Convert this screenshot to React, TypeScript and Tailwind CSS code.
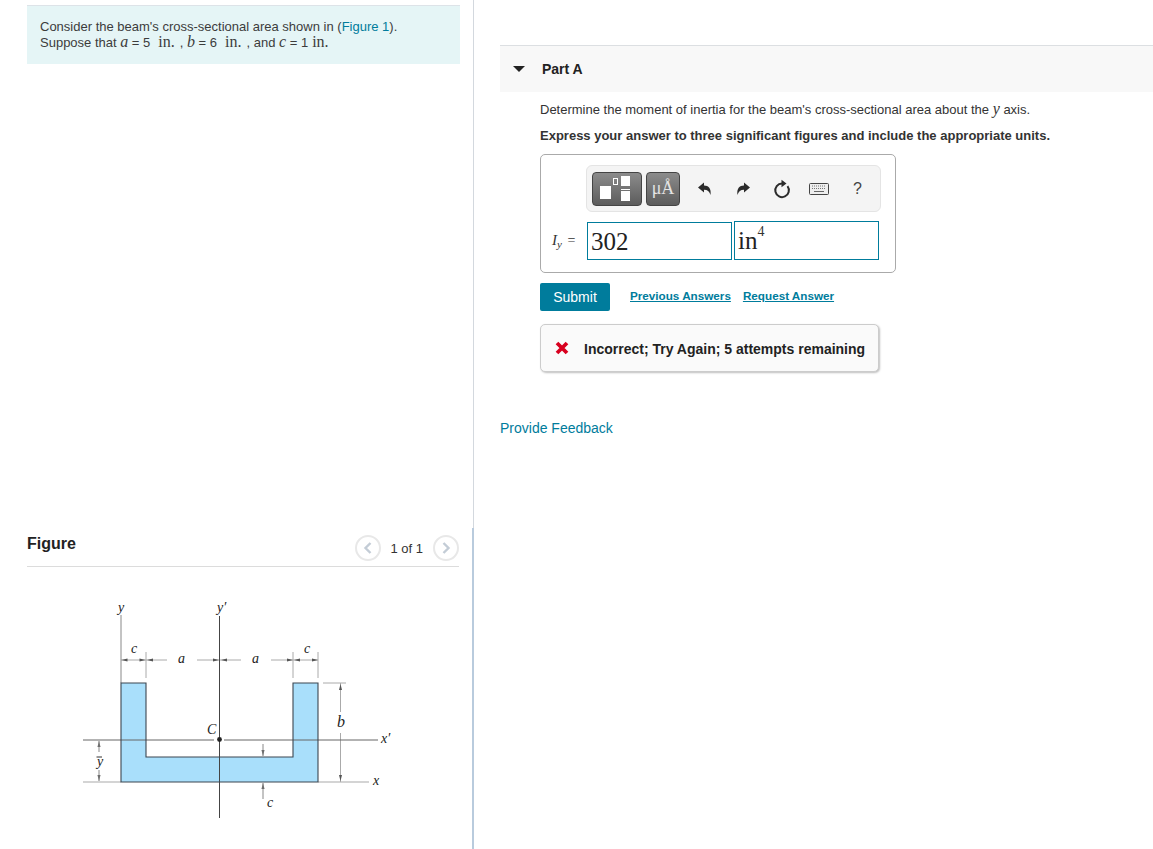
const sans = "font-['Liberation_Sans',Arial,sans-serif]";
const serif = "font-['Liberation_Serif','Times_New_Roman',serif]";

function V({ children }: { children: string }) {
  return <i className={`${serif} text-[16px]`}>{children}</i>;
}

function Unit() {
  return <span className={`${serif} text-[16px] ml-[8px] mr-[5px]`}>in.</span>;
}

function Arrow({ x, y, dir }: { x: number; y: number; dir: "l" | "r" | "u" | "d" }) {
  const pts = {
    l: `${x},${y} ${x + 6},${y - 1.5} ${x + 6},${y + 1.5}`,
    r: `${x},${y} ${x - 6},${y - 1.5} ${x - 6},${y + 1.5}`,
    u: `${x},${y} ${x - 1.5},${y + 6} ${x + 1.5},${y + 6}`,
    d: `${x},${y} ${x - 1.5},${y - 6} ${x + 1.5},${y - 6}`,
  }[dir];
  return <polygon points={pts} fill="#555" />;
}

function Label({ x, y, children, size = 14 }: { x: number; y: number; children: string; size?: number }) {
  return (
    <text x={x} y={y} fontFamily="Liberation Serif" fontStyle="italic" fontSize={size} fill="#222">
      {children}
    </text>
  );
}

function BeamFigure() {
  return (
    <svg viewBox="27 567 433 280" className="block w-[433px] h-[280px]">
      <path d="M121 683H146V757H293V683H318V782H121Z" fill="#a9dffb" stroke="none" />
      {/* dimension lines */}
      <g stroke="#aaa" strokeWidth="1" fill="none">
        <path d="M146 652V678M293 652V678M318 652V678" />
        <path d="M121 660H146M146 660H167M197 660H219.5M219.5 660H241M271 660H293M293 660H318" />
        <path d="M323 683H346M340.5 683V712M340.5 733V782" />
      </g>
      <Arrow x={121.5} y={660} dir="l" />
      <Arrow x={145.5} y={660} dir="r" />
      <Arrow x={147} y={660} dir="l" />
      <Arrow x={219} y={660} dir="r" />
      <Arrow x={221} y={660} dir="l" />
      <Arrow x={293} y={660} dir="r" />
      <Arrow x={294} y={660} dir="l" />
      <Arrow x={318} y={660} dir="r" />
      <Arrow x={340.5} y={684} dir="u" />
      <Arrow x={340.5} y={781} dir="d" />
      <Arrow x={263} y={756} dir="d" />
      <Arrow x={263} y={783} dir="u" />
      <Arrow x={99} y={741} dir="u" />
      <Arrow x={99} y={781} dir="d" />
      <path d="M263 744V756M263 783V799M99 741V752M99 770V781" stroke="#888" fill="none" />
      {/* axes */}
      <path d="M83 740H214M224 740H378" stroke="#666" fill="none" />
      <path d="M83 782H121M318 782H369" stroke="#aaa" strokeWidth="1.2" fill="none" />
      <path d="M121 615V683" stroke="#888" fill="none" />
      <path d="M219.5 616V818" stroke="#444" fill="none" />
      <path d="M121 683H146V757H293V683H318V782H121Z" fill="none" stroke="#3c4650" strokeWidth="1.1" />
      <circle cx="219.5" cy="739.5" r="2.4" fill="#222" />
      <Label x={118} y={612}>y</Label>
      <Label x={217} y={612}>y′</Label>
      <Label x={131} y={653}>c</Label>
      <Label x={178} y={663}>a</Label>
      <Label x={252} y={663}>a</Label>
      <Label x={304} y={653}>c</Label>
      <Label x={207} y={734}>C</Label>
      <Label x={337} y={727} size={16}>b</Label>
      <Label x={381} y={743}>x′</Label>
      <Label x={373} y={785}>x</Label>
      <Label x={267} y={807}>c</Label>
      <Label x={97} y={766}>y</Label>
      <path d="M96.5 757H102" stroke="#333" fill="none" />
    </svg>
  );
}

function PagerButton({ d }: { d: string }) {
  return (
    <span className="w-[26px] h-[26px] rounded-full border-2 border-[#e8e8e8] flex items-center justify-center">
      <svg viewBox="0 0 12 16" className="w-[12px] h-[16px]">
        <path d={d} stroke="#c3ccd6" strokeWidth="2.4" fill="none" />
      </svg>
    </span>
  );
}

function Pager() {
  return (
    <div className="flex items-center text-[13px] text-[#333] mb-[5px]">
      <PagerButton d="M8.5 3L3.5 8L8.5 13" />
      <span className="ml-[9px] mr-[10px] mt-[2px]">1 of 1</span>
      <PagerButton d="M3.5 3L8.5 8L3.5 13" />
    </div>
  );
}

function Toolbar() {
  return (
    <div className="ml-[45px] w-[295px] h-[47px] rounded-[6px] border border-[#e4e4e4] bg-[#f4f4f4] flex items-center pl-[5px]">
      <div className="w-[50px] h-[34px] rounded-[4px] border border-[#444] bg-gradient-to-b from-[#8c8c8c] to-[#5c5c5c] relative">
        <span className="absolute left-[7px] top-[13px] w-[11px] h-[13px] bg-white" />
        <span className="absolute left-[20px] top-[5px] w-[5px] h-[7px] border border-white" />
        <span className="absolute left-[28px] top-[3px] w-[9px] h-[10px] bg-white" />
        <span className="absolute left-[28px] top-[16px] w-[9px] h-[1px] bg-white" />
        <span className="absolute left-[28px] top-[18px] w-[9px] h-[10px] bg-white" />
      </div>
      <div className={`ml-[4px] w-[34px] h-[34px] rounded-[4px] border border-[#444] bg-gradient-to-b from-[#8c8c8c] to-[#5c5c5c] flex items-center justify-center text-[#e4e4e4] text-[18px] ${serif}`}>
        μÅ
      </div>
      <svg viewBox="0 0 16 16" className="ml-[17px] w-[16px] h-[16px]">
        <path d="M1 6.5L7 1.5V4.5C11.5 4.5 14.5 7.5 13.5 14C12.5 10.5 10.5 8.8 7 8.8V11.5Z" fill="#2b2b2b" />
      </svg>
      <svg viewBox="0 0 16 16" className="ml-[22px] w-[16px] h-[16px]">
        <path d="M15 6.5L9 1.5V4.5C4.5 4.5 1.5 7.5 2.5 14C3.5 10.5 5.5 8.8 9 8.8V11.5Z" fill="#2b2b2b" />
      </svg>
      <svg viewBox="0 0 20 20" className="ml-[21px] w-[20px] h-[20px]">
        <path d="M10 4.5A6.8 6.8 0 1 0 15.5 7.2" stroke="#2b2b2b" strokeWidth="2" fill="none" />
        <path d="M9.5 0.8L14.5 4.5L9.5 8.2Z" fill="#2b2b2b" />
      </svg>
      <svg viewBox="0 0 20 12" className="ml-[17px] w-[20px] h-[12px]">
        <rect x="0.5" y="0.5" width="19" height="11" rx="1" fill="#eee" stroke="#444" />
        <path d="M3 3H17M3 5.5H17" stroke="#777" strokeDasharray="1 1" fill="none" />
        <path d="M5 8.5H15" stroke="#666" fill="none" />
      </svg>
      <span className="ml-[24px] text-[16px] text-[#444]">?</span>
    </div>
  );
}

export default function App() {
  return (
    <div className={`${sans} flex w-[1153px] h-[849px] overflow-hidden bg-white text-[#333]`}>
      <div className="w-[474px] shrink-0 flex flex-col">
        <div className="h-[528px] pt-[5px] pl-[27px] pr-[13px] border-r border-[#d3d8de]">
          <div className="h-[59px] border-t border-[#dde3e8] bg-[#e5f5f6] pl-[13px] pt-[13px] text-[13px] leading-[16px] text-[#3c3c3c]">
            <p className="leading-[15px]">
              Consider the beam's cross-sectional area shown in (<span className="text-[#007c9c]">Figure 1</span>).
            </p>
            <p>
              Suppose that <V>a</V> = 5<Unit />, <V>b</V> = 6<Unit />, and <V>c</V> = 1<span className={`${serif} text-[16px] ml-[4px]`}>in.</span>
            </p>
          </div>
        </div>
        <div className="h-[321px] pl-[27px] pr-[13px] border-r-2 border-[#b9cbdd]">
          <div className="h-[39px] flex items-end justify-between border-b border-[#dcdcdc]">
            <h2 className="text-[16px] font-bold text-[#222] mb-[10px]">Figure</h2>
            <Pager />
          </div>
          <BeamFigure />
        </div>
      </div>

      <div className="flex-1 pl-[26px] pt-[45px]">
        <div className="h-[47px] border-t border-[#dcdfe2] bg-[#f8f8f8] flex items-center">
          <span className="ml-[13px] w-0 h-0 border-x-[6px] border-x-transparent border-t-[6px] border-t-[#222]" />
          <span className="ml-[17px] text-[14px] font-bold text-[#222]">Part A</span>
        </div>
        <div className="pl-[40px]">
          <p className="mt-[9px] text-[13px] leading-[15px] text-[#333]">
            Determine the moment of inertia for the beam's cross-sectional area about the <i className={`${serif} text-[16px]`}>y</i> axis.
          </p>
          <p className="mt-[11px] text-[13px] leading-[15px] font-bold text-[#333]">
            Express your answer to three significant figures and include the appropriate units.
          </p>

          <div className="mt-[11px] w-[356px] h-[119px] rounded-[5px] border border-[#aaa] pt-[10px]">
            <Toolbar />
            <div className="mt-[9px] flex items-center">
              <span className={`${serif} ml-[11px] w-[35px] text-[15px] text-[#333]`}>
                <i>I<sub className="text-[11px]">y</sub></i><span className="ml-[2px] text-[14px]"> =</span>
              </span>
              <div className={`${serif} w-[145px] h-[38px] border border-[#007c9c] pl-[3px] text-[25px] leading-[38px] text-[#222]`}>302</div>
              <div className={`${serif} ml-[2px] w-[145px] h-[39px] border border-[#007c9c] pl-[3px] text-[25px] leading-[38px] text-[#222]`}>
                in<sup className="text-[14px] text-[#333] align-[6px] leading-none">4</sup>
              </div>
            </div>
          </div>

          <div className="mt-[10px] flex items-center">
            <button className="w-[70px] h-[28px] rounded-[2px] bg-[#007c9c] text-white text-[14px]">Submit</button>
            <a className="ml-[20px] mb-[2px] text-[11.7px] font-bold text-[#007c9c] underline">Previous Answers</a>
            <a className="ml-[12px] mb-[2px] text-[11.7px] font-bold text-[#007c9c] underline">Request Answer</a>
          </div>

          <div className="mt-[13px] w-[339px] h-[48px] rounded-[5px] border border-[#ccc] bg-[#fafafa] shadow-[1px_1px_2px_rgba(0,0,0,0.25)] flex items-center pl-[14px]">
            <svg viewBox="0 0 14 14" className="w-[14px] h-[14px]">
              <path d="M2 2L12 12M12 2L2 12" stroke="#d8001f" strokeWidth="3.8" fill="none" />
            </svg>
            <span className="ml-[15px] mt-[2px] text-[14px] font-bold text-[#222]">Incorrect; Try Again; 5 attempts remaining</span>
          </div>
        </div>
        <a className="block mt-[46px] text-[14px] text-[#007c9c]">Provide Feedback</a>
      </div>
    </div>
  );
}
